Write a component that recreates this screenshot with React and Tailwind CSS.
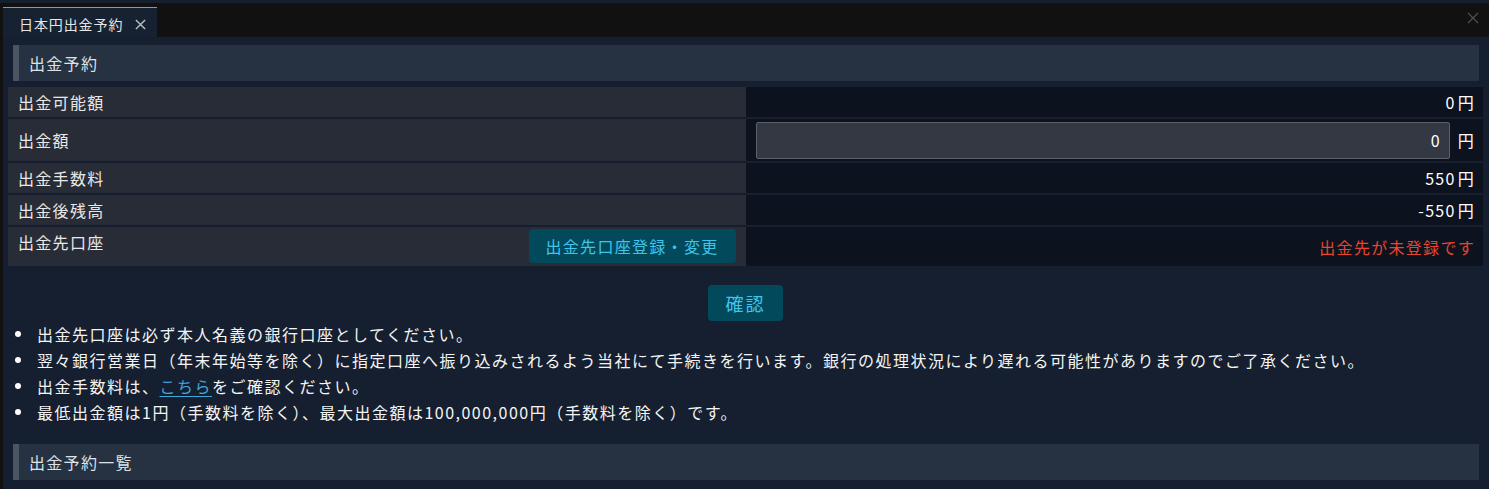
import React from "react";

const font = "font-['Noto_Sans_CJK_JP','Noto_Sans',sans-serif]";

function CloseIcon({ className, stroke = "currentColor", width = 1.5 }) {
  return (
    <svg viewBox="0 0 12 12" className={className} fill="none">
      <path d="M1 1 L11 11 M11 1 L1 11" stroke={stroke} strokeWidth={width} />
    </svg>
  );
}

function SectionHeader({ title }) {
  return (
    <div className="ml-[5px] mr-[4px] h-[36px] bg-[#263241] border-l-[6px] border-[#4a5563] pl-[10px] flex items-center text-[16px] tracking-[1.3px] text-[#dde2e8]">
      {title}
    </div>
  );
}

function Label({ children }) {
  return <div className="bg-[#282c36] flex items-center pl-[10px] text-[16px] tracking-[1.3px] text-[#e8e8e8]">{children}</div>;
}

function Amount({ value }) {
  return (
    <div className="bg-[#0c121e] flex items-center justify-end pr-[8px] text-[16px] tracking-[1.3px] text-white">
      <span>{value}</span>
      <span className="ml-[2px]">円</span>
    </div>
  );
}

export default function App() {
  return (
    <div className={`w-[1489px] h-[489px] bg-[#111111] flex flex-col overflow-hidden ${font}`}>
      <div className="h-[3px] bg-[#151f2d] shrink-0" />
      <div className="flex-1 flex min-h-0">
        <div className="w-[3px] bg-[#111111] shrink-0" />
        <div className="flex-1 flex flex-col min-w-0">
          {/* tab strip */}
          <div className="relative h-[34px] bg-[#111111] flex items-end shrink-0">
            <div className="w-[154px] h-[30px] bg-[#162131] border-t border-[#3bb8e0] flex items-center pl-[16px] pt-[3px] text-[14px] tracking-[0.9px] text-[#e6e6e6]">
              <span>日本円出金予約</span>
              <CloseIcon className="ml-[12px] w-[11px] h-[11px] text-[#b8bcc2]" width={1.6} />
            </div>
            <CloseIcon className="absolute right-[10px] top-[9px] w-[12px] h-[12px] text-[#4d4f52]" width={1.3} />
          </div>

          {/* content */}
          <div className="flex-1 bg-[#151f2f] pl-[5px] pr-[6px] pt-[8px] flex flex-col">
            <SectionHeader title="出金予約" />

            <div className="mt-[6px] grid grid-cols-2 gap-y-[2px]">
              <div className="col-span-2 grid grid-cols-2 h-[30px]">
                <Label>出金可能額</Label>
                <Amount value="0" />
              </div>

              <div className="col-span-2 grid grid-cols-2 h-[42px]">
                <Label>出金額</Label>
                <div className="bg-[#0c121e] flex items-center pl-[10px] pr-[8px]">
                  <div className="flex-1 h-[37px] bg-[#343843] border border-[#5c6069] rounded-[2px] flex items-center justify-end pr-[9px] text-[16px] text-white">
                    0
                  </div>
                  <span className="ml-[8px] text-[16px] tracking-[1.3px] text-white">円</span>
                </div>
              </div>

              <div className="col-span-2 grid grid-cols-2 h-[30px]">
                <Label>出金手数料</Label>
                <Amount value="550" />
              </div>

              <div className="col-span-2 grid grid-cols-2 h-[30px]">
                <Label>出金後残高</Label>
                <Amount value="-550" />
              </div>

              <div className="col-span-2 grid grid-cols-2 h-[39px]">
                <div className="bg-[#282c36] flex justify-between items-start pl-[10px] pr-[10px] text-[16px] tracking-[1.3px] text-[#e8e8e8]">
                  <span className="leading-[20px] pt-[5px]">出金先口座</span>
                  <button className="mt-[2px] w-[207px] h-[34px] rounded-[4px] bg-[#024a5b] text-[#40c4ea] text-[16px] tracking-[1.3px] flex items-center justify-center">
                    出金先口座登録・変更
                  </button>
                </div>
                <div className="bg-[#0c121e] flex items-center justify-end pr-[8px] text-[16px] tracking-[1.3px] text-[#e8442f]">
                  出金先が未登録です
                </div>
              </div>
            </div>

            <button className="mt-[19px] mx-auto w-[75px] h-[36px] rounded-[4px] bg-[#024a5b] text-[#40c4ea] text-[18px] tracking-[2px] flex items-center justify-center">
              確認
            </button>

            <ul className="text-[16px] leading-[26px] tracking-[1.5px] text-[#f4f4f4]">
              {[
                <>出金先口座は必ず本人名義の銀行口座としてください。</>,
                <>翌々銀行営業日（年末年始等を除く）に指定口座へ振り込みされるよう当社にて手続きを行います。銀行の処理状況により遅れる可能性がありますのでご了承ください。</>,
                <>
                  出金手数料は、<a className="text-[#3ea6dc] underline underline-offset-[3px]">こちら</a>をご確認ください。
                </>,
                <>最低出金額は1円（手数料を除く）、最大出金額は100,000,000円（手数料を除く）です。</>,
              ].map((item, i) => (
                <li key={i} className="flex items-center">
                  <span className="ml-[7px] mr-[16px] w-[6px] h-[6px] rounded-full bg-white shrink-0" />
                  <span className="whitespace-nowrap">{item}</span>
                </li>
              ))}
            </ul>

            <div className="mt-[19px]">
              <SectionHeader title="出金予約一覧" />
            </div>
          </div>
        </div>
      </div>
    </div>
  );
}
